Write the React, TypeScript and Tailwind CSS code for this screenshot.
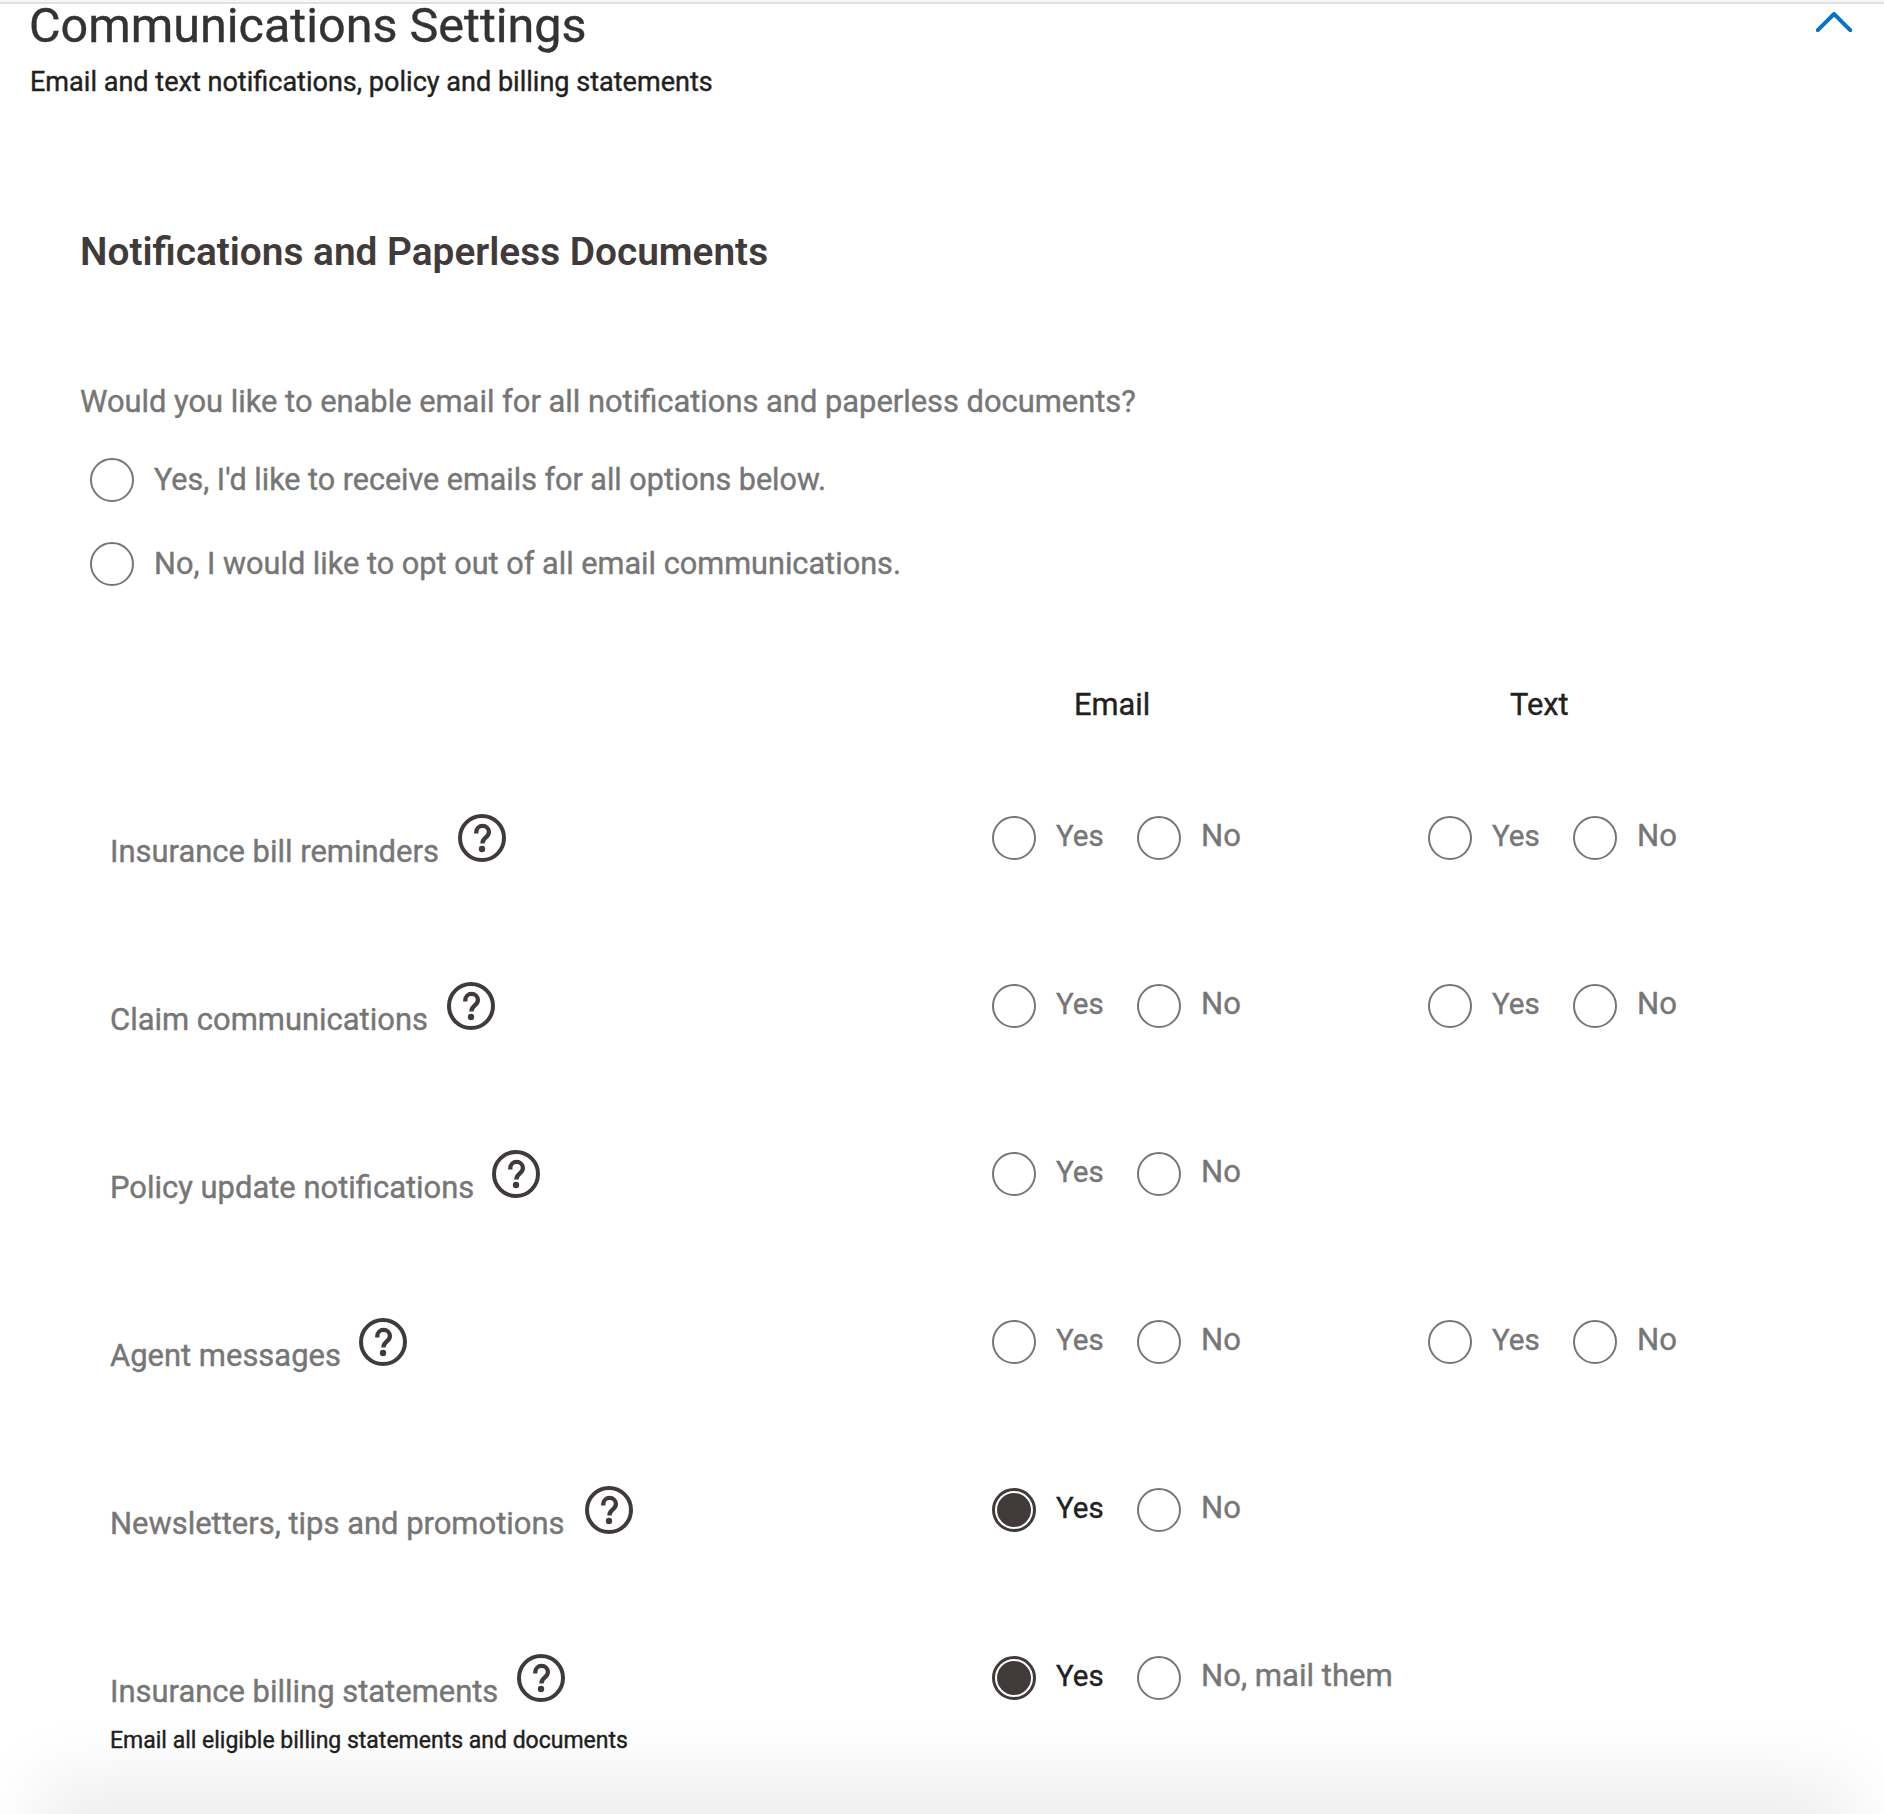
type Choice = { no: string; selected?: "yes" };
type Item = { label: string; width: string; email: Choice; text?: Choice; note?: string };

const items: Item[] = [
  { label: "Insurance bill reminders", width: "w-[348px]", email: { no: "No" }, text: { no: "No" } },
  { label: "Claim communications", width: "w-[337px]", email: { no: "No" }, text: { no: "No" } },
  { label: "Policy update notifications", width: "w-[382px]", email: { no: "No" } },
  { label: "Agent messages", width: "w-[249px]", email: { no: "No" }, text: { no: "No" } },
  { label: "Newsletters, tips and promotions", width: "w-[475px]", email: { no: "No", selected: "yes" } },
  {
    label: "Insurance billing statements",
    width: "w-[407px]",
    email: { no: "No, mail them", selected: "yes" },
    note: "Email all eligible billing statements and documents",
  },
];

function RadioMark({ checked = false }: { checked?: boolean }) {
  return checked ? (
    <span className="block size-11 shrink-0 rounded-full border-[3px] border-[#403b3a] bg-white p-[2px]">
      <span className="block size-full rounded-full bg-[#403b3a]" />
    </span>
  ) : (
    <span className="block size-11 shrink-0 rounded-full border-2 border-[#767676] bg-white" />
  );
}

function WideOption({ label, size }: { label: string; size: string }) {
  return (
    <label className="flex h-11 items-center gap-5">
      <RadioMark />
      <span className={`leading-[42px] ${size}`}>{label}</span>
    </label>
  );
}

function YesNo({ choice }: { choice: Choice }) {
  const yes = choice.selected === "yes";
  return (
    <div className="flex h-11">
      <label className="flex w-[145px] items-center gap-5">
        <RadioMark checked={yes} />
        <span className={yes ? "pb-[5px] text-[29.5px] leading-10 text-[#231f20]" : "pb-[5px] text-[29.5px] leading-10"}>Yes</span>
      </label>
      <label className="flex items-center gap-5 whitespace-nowrap">
        <RadioMark />
        <span className="pb-[5px] text-[31.1px] leading-10">{choice.no}</span>
      </label>
    </div>
  );
}

function HelpIcon() {
  return (
    <svg viewBox="0 0 48 48" className="size-12 shrink-0" fill="none" stroke="#403b3a" strokeWidth="4">
      <circle cx="24" cy="24" r="22" />
      <path strokeWidth="4.3" d="M18.3 19.6V18a6.3 6.1 0 0 1 12.6 0c0 2.4-1 3.6-2.8 5.2-2.3 2-3.7 3.2-3.7 6.2" />
      <circle cx="24" cy="35" r="3.2" fill="#403b3a" stroke="none" />
    </svg>
  );
}

export default function App() {
  return (
    <div className="relative h-[1814px] w-[1884px] bg-white font-['Roboto',sans-serif] text-[#767676] [-webkit-text-stroke:0.4px]">
      <div className="h-1 border-b-2 border-[#e0e0e0] bg-[#f7f7f7]" />

      <header className="flex h-24 justify-between pr-8 pl-[30px]">
        <div>
          <h1 className="-ml-px pt-px text-[48.5px] leading-[42px] text-[#333333]">Communications Settings</h1>
          <p className="mt-[17px] text-[27.05px] leading-9 text-[#231f20]">
            Email and text notifications, policy and billing statements
          </p>
        </div>
        <svg viewBox="0 0 36 20" className="mt-2 h-5 w-9" fill="none" stroke="#0a72c4" strokeWidth="4" strokeLinecap="round" strokeLinejoin="round">
          <path d="M1.8 18.2 18 2l16.2 16.2" />
        </svg>
      </header>

      <main className="pl-20">
        <h2 className="mt-32 text-[38.8px] leading-[48px] font-semibold text-[#403b3a] [-webkit-text-stroke:0]">
          Notifications and Paperless Documents
        </h2>
        <p className="mt-[106px] text-[30.87px] leading-10">
          Would you like to enable email for all notifications and paperless documents?
        </p>
        <div className="mt-9 ml-[10px] flex flex-col gap-10">
          <WideOption size="text-[30.5px]" label="Yes, I'd like to receive emails for all options below." />
          <WideOption size="text-[30.7px]" label="No, I would like to opt out of all email communications." />
        </div>

        <section className="ml-[29px]">
          <div className="mt-[99px] grid grid-cols-[883px_436px_1fr] text-[30.8px] leading-10 text-[#231f20]">
            <span />
            <span className="pl-[82px]">Email</span>
            <span className="pl-[82px]">Text</span>
          </div>
          <div className="mt-[89px]">
            {items.map((item) => (
              <div key={item.label} className="grid h-[168px] grid-cols-[883px_436px_1fr]">
                <div>
                  <div className="flex h-12 pl-px">
                    <span className={`mt-[18px] text-[30.95px] leading-10 whitespace-nowrap ${item.width}`}>
                      {item.label}
                    </span>
                    <HelpIcon />
                  </div>
                  {item.note && <p className="mt-6 ml-px text-[23px] leading-[30px] text-[#231f20]">{item.note}</p>}
                </div>
                <div className="pt-[2px]">
                  <YesNo choice={item.email} />
                </div>
                <div className="pt-[2px]">{item.text && <YesNo choice={item.text} />}</div>
              </div>
            ))}
          </div>
        </section>
      </main>

      <div className="pointer-events-none absolute inset-x-0 bottom-0 h-40 overflow-hidden pt-40">
        <div className="mr-8 ml-10 h-24 shadow-[0_-34px_76px_rgba(0,0,0,0.08)]" />
      </div>
    </div>
  );
}
